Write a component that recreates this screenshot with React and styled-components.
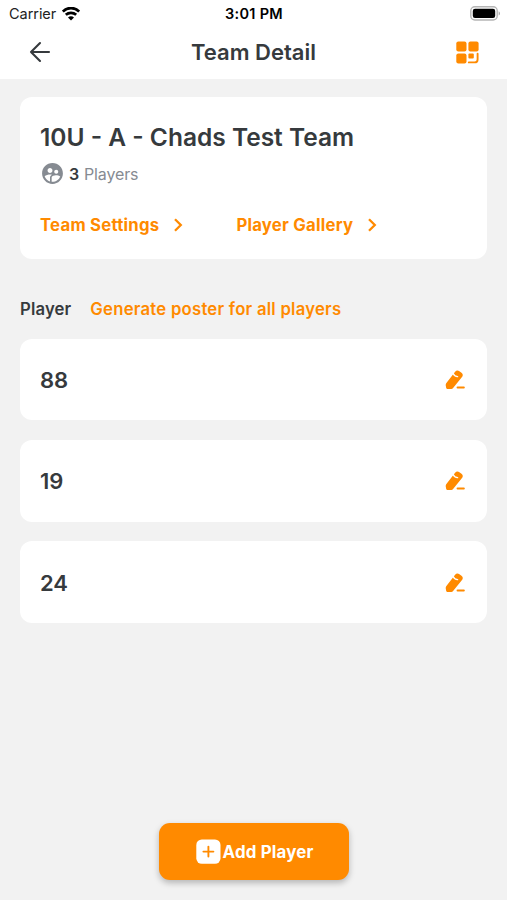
import React from "react"
import styled, { createGlobalStyle } from "styled-components"
import { MdSupervisedUserCircle } from "react-icons/md"

const GlobalStyle = createGlobalStyle`
    * {
        box-sizing: border-box;
    }

    body {
        margin: 0;
        background-color: #f2f2f2;
        color: #363a3d;
        font-family: Inter, "Liberation Sans", sans-serif;
    }

    h1, h2, h3, p {
        margin: 0;
    }

    button {
        font-family: inherit;
        border: 0;
        padding: 0;
        background: none;
    }

    svg {
        display: block;
        flex-shrink: 0;
    }
`;

const Screen = styled.div`
    display: flex;
    flex-direction: column;
    height: 900px;
    overflow: hidden;
`;

const Top = styled.header`
    height: 79px;
    background-color: white;
`;

const StatusBar = styled.div`
    display: grid;
    grid-template-columns: 1fr auto 1fr;
    align-items: center;
    height: 27px;
    padding: 0 6px 0 9px;
    color: black;
    font-size: 14.5px;
    line-height: 27px;
`;

const Carrier = styled.div`
    display: flex;
    align-items: center;
    gap: 6px;
    letter-spacing: -0.05px;
    color: #222;
`;

const Time = styled.time`
    font-weight: 600;
    letter-spacing: 0.3px;
    margin-right: 2px;
`;

const BatteryWrapper = styled.div`
    display: flex;
    justify-content: flex-end;
`;

const NavBar = styled.nav`
    display: flex;
    align-items: center;
    justify-content: space-between;
    height: 50px;
    padding: 0 28px 0 29px;
`;

const IconButton = styled.button`
    display: flex;
    color: ${props => props.$accent ? "#ff8a00" : "#363a3d"};
`;

const NavTitle = styled.h1`
    font-size: 22px;
    font-weight: 600;
    line-height: 28px;
`;

const Content = styled.main`
    flex: 1;
    padding: 18px 20px 0;
`;

const Card = styled.section`
    background-color: white;
    border-radius: 12px;
`;

const TeamCard = styled(Card)`
    height: 162px;
    padding: 24px 20px 0;
`;

const TeamName = styled.h2`
    font-size: 24.5px;
    font-weight: 600;
    line-height: 32px;
`;

const PlayerCount = styled.p`
    display: flex;
    align-items: center;
    margin-top: 8px;
    height: 25px;
    font-size: 16px;
    letter-spacing: -0.15px;
    color: #868b92;

    svg {
        margin-right: 4px;
    }

    strong {
        margin-right: 5px;
        font-weight: 600;
        color: #363a3d;
    }
`;

const LinkRow = styled.div`
    display: flex;
    gap: 52px;
    margin-top: 27px;
`;

const CardLink = styled.button`
    display: flex;
    align-items: center;
    gap: 13px;
    font-size: 16.7px;
    font-weight: 700;
    line-height: 24px;
    letter-spacing: 0.25px;
    color: #ff8a00;
`;

const ListHeader = styled.div`
    display: flex;
    align-items: center;
    gap: 19px;
    height: 79.6px;
    padding-top: 20px;
`;

const ListTitle = styled.h3`
    font-size: 16.7px;
    font-weight: 600;
    letter-spacing: 0.15px;
`;

const PosterButton = styled.button`
    font-size: 16.7px;
    font-weight: 600;
    letter-spacing: 0.25px;
    color: #ff8a00;
`;

const PlayerList = styled.div`
    display: grid;
    gap: 19.7px;
`;

const PlayerCard = styled(Card)`
    display: flex;
    align-items: center;
    justify-content: space-between;
    height: 81.7px;
    padding: 1px 20px 0;
`;

const PlayerNumber = styled.span`
    font-size: 22px;
    font-weight: 600;
`;

const BottomBar = styled.footer`
    display: flex;
    justify-content: center;
    height: 77px;
`;

const AddButton = styled.button`
    display: flex;
    align-items: center;
    justify-content: center;
    gap: 2px;
    width: 190px;
    height: 57px;
    padding-left: 2px;
    border-radius: 11px;
    background-color: #ff8a00;
    box-shadow: 0 3px 6px rgba(0, 0, 0, 0.25);
    color: white;
    font-size: 16.9px;
    font-weight: 700;
    letter-spacing: 0.15px;
`;

const WifiIcon = () => (
    <svg width="18" height="14" viewBox="0 0 18 14" fill="none" stroke="black" strokeWidth="2.7">
        <path d="M.8 4.5C5.4-.1 12.6-.1 17.2 4.5" />
        <path d="M3.8 7.8c3-2.7 7.4-2.7 10.4 0" />
        <path d="M9 13.4 6 10.4c1.8-1.5 4.2-1.5 6 0z" fill="black" stroke="none" />
    </svg>
);

const BatteryIcon = () => (
    <svg width="31" height="15" viewBox="0 0 31 15">
        <rect x="0.8" y="0.8" width="26.4" height="13.2" rx="4" fill="white" stroke="#b5b5b5" strokeWidth="1.4" />
        <rect x="2.8" y="2.8" width="22.4" height="9.2" rx="2.2" fill="black" />
        <path d="M28.7 5.2c1.7.8 1.7 3.6 0 4.4z" fill="#a5a5a5" />
    </svg>
);

const BackIcon = () => (
    <svg width="22" height="22" viewBox="0 0 22 22" fill="none" stroke="currentColor" strokeWidth="2.1" strokeLinecap="round" strokeLinejoin="round">
        <path d="M20 11H2M11 2l-9 9 9 9" />
    </svg>
);

const QrIcon = () => (
    <svg width="23" height="23" viewBox="0 0 23 23" fill="currentColor">
        <rect x="0.3" y="0.4" width="10.2" height="10" rx="2" />
        <rect x="12.4" y="0.4" width="10.2" height="10" rx="2" />
        <rect x="0.3" y="12.4" width="10.2" height="10" rx="2" />
        <rect x="12.4" y="12.4" width="5.4" height="5.2" rx="1" />
        <path d="M21.6 12.8v5.6c0 2-1 3-3 3h-5.8" fill="none" stroke="currentColor" strokeWidth="1.9" strokeLinecap="round" />
    </svg>
);

const ChevronIcon = () => (
    <svg width="12" height="14" viewBox="0 0 12 14" fill="none" stroke="currentColor" strokeWidth="2.3">
        <path d="M3 1.2 8.8 7 3 12.8" />
    </svg>
);

const EditIcon = () => (
    <svg width="24" height="24" viewBox="0 0 24 24" fill="currentColor">
        <path d="M3.2 15.2 12.1 3.8c1.2-1.5 2.8-1.7 4.3-.6l2.1 1.6c1.5 1.2 1.7 2.8.5 4.3L9.9 20.2c-.4.5-.9.7-1.5.7l-3.6.2c-1.1 0-1.7-.6-1.7-1.5L2.7 17.3c0-.8.1-1.5.5-2.1z" />
        <path d="M10.2 5.4c.8 2 2.1 3 4.4 3.2" fill="none" stroke="white" strokeWidth="1.4" strokeLinecap="round" />
        <rect x="13.6" y="18.4" width="8.2" height="2" rx="0.9" />
    </svg>
);

const PlusIcon = () => (
    <svg width="25" height="25" viewBox="0 0 25 25">
        <rect x="0.3" y="0.4" width="24.2" height="24.4" rx="5.5" fill="white" />
        <path d="M12.4 7.6v10M7.4 12.6h10" stroke="#ff8a00" strokeWidth="1.9" strokeLinecap="round" />
    </svg>
);

const App = () => {

    const links = ['Team Settings', 'Player Gallery']
    const players = ['88', '19', '24']

    return (
        <Screen>
            <GlobalStyle />
            <Top>
                <StatusBar>
                    <Carrier>Carrier <WifiIcon /></Carrier>
                    <Time>3:01 PM</Time>
                    <BatteryWrapper><BatteryIcon /></BatteryWrapper>
                </StatusBar>
                <NavBar>
                    <IconButton aria-label="Back"><BackIcon /></IconButton>
                    <NavTitle>Team Detail</NavTitle>
                    <IconButton $accent aria-label="Team code"><QrIcon /></IconButton>
                </NavBar>
            </Top>
            <Content>
                <TeamCard>
                    <TeamName>10U - A - Chads Test Team</TeamName>
                    <PlayerCount>
                        <MdSupervisedUserCircle size={25} />
                        <strong>3</strong> Players
                    </PlayerCount>
                    <LinkRow>
                        {links.map(link => (
                            <CardLink key={link}>
                                {link}
                                <ChevronIcon />
                            </CardLink>
                        ))}
                    </LinkRow>
                </TeamCard>
                <ListHeader>
                    <ListTitle>Player</ListTitle>
                    <PosterButton>Generate poster for all players</PosterButton>
                </ListHeader>
                <PlayerList>
                    {players.map(player => (
                        <PlayerCard key={player}>
                            <PlayerNumber>{player}</PlayerNumber>
                            <IconButton $accent aria-label="Edit player"><EditIcon /></IconButton>
                        </PlayerCard>
                    ))}
                </PlayerList>
            </Content>
            <BottomBar>
                <AddButton><PlusIcon /> Add Player</AddButton>
            </BottomBar>
        </Screen>
    )
};

export default App;
